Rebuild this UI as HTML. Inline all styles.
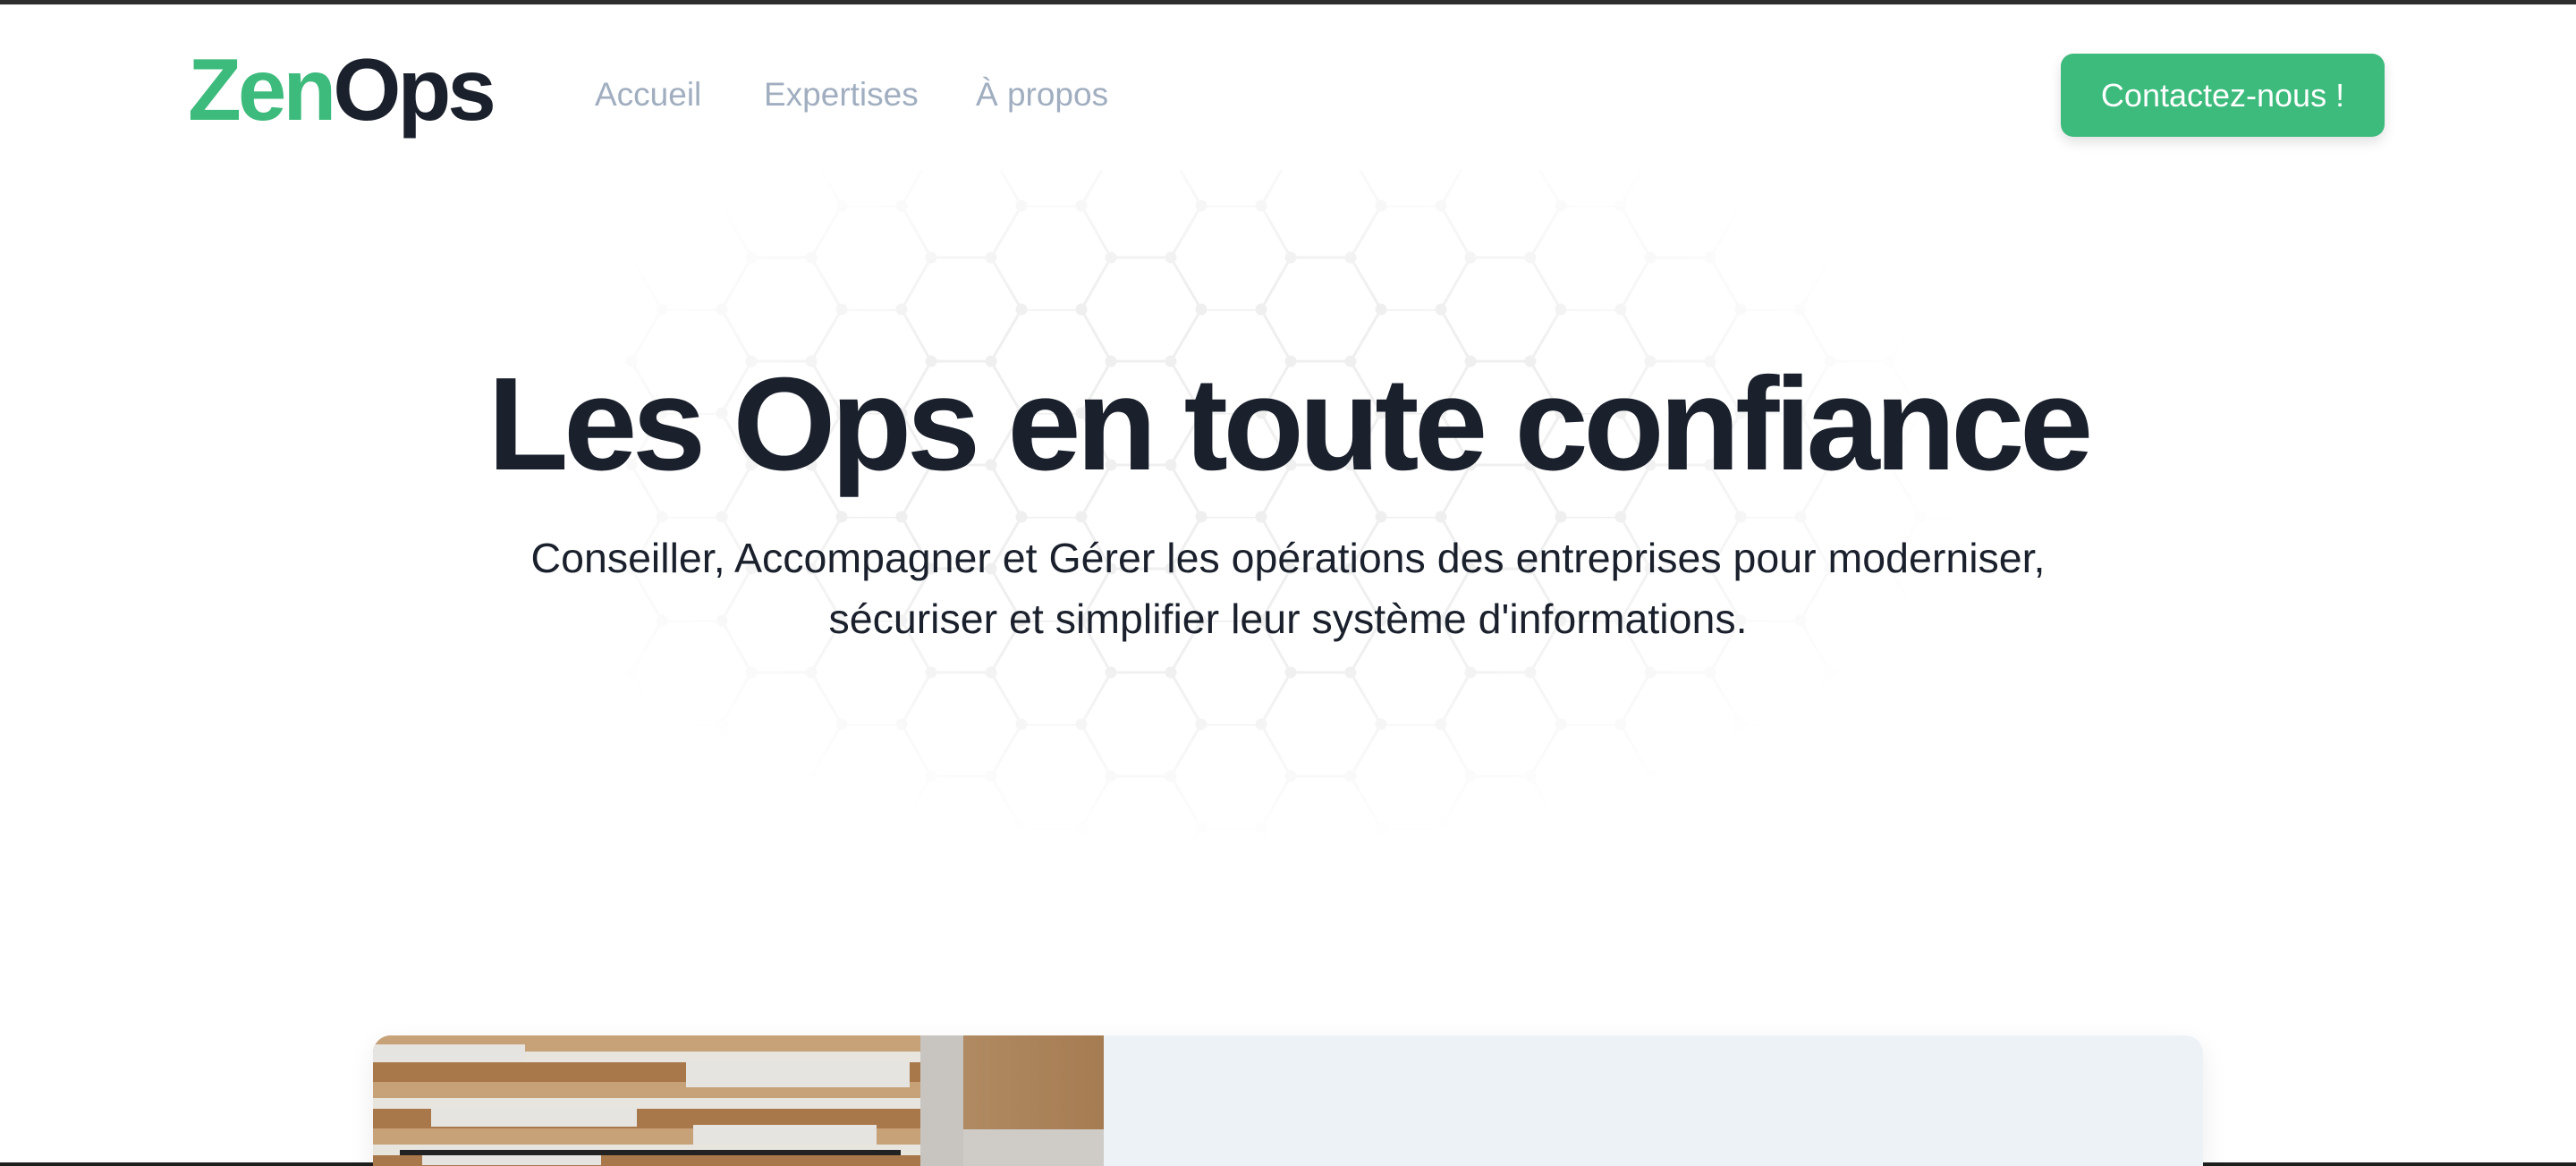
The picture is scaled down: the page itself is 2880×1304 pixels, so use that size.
<!DOCTYPE html>
<html><head><meta charset="utf-8"><style>
*{margin:0;padding:0;box-sizing:border-box}
html,body{width:2880px;height:1304px;overflow:hidden;background:#fff;font-family:"Liberation Sans",sans-serif}
#w{position:relative;width:2880px;height:1304px;overflow:hidden}
.topbar{position:absolute;left:0;top:0;width:2880px;height:5px;background:#2d2d2d}
.logo{position:absolute;left:210px;top:40px;font-size:98px;font-weight:700;letter-spacing:-4px;line-height:120px}
.logo .z{color:#3dbb7c}.logo .o{color:#1a202c}
.nav{position:absolute;top:84px;font-size:37px;color:#a0aec0;line-height:44px}
.btn{position:absolute;left:2304px;top:60px;width:362px;height:93px;background:#3dbb7c;border-radius:14px;color:#fff;font-size:36px;text-align:center;line-height:93px;box-shadow:0 6px 14px rgba(0,0,0,.12)}
.hex{position:absolute;left:700px;top:190px}
h1{position:absolute;left:0;width:2880px;top:395px;text-align:center;font-size:148px;font-weight:700;color:#1a202c;letter-spacing:-5.5px;line-height:160px}
.sub{position:absolute;left:0;width:2880px;top:590px;text-align:center;font-size:46.5px;color:#1a202c;line-height:68px}
.card{position:absolute;left:417px;top:1158px;width:2046px;height:146px;border-radius:20px 20px 0 0;overflow:hidden;background:#edf2f7;box-shadow:0 10px 30px rgba(0,0,0,.08);z-index:2}
.img{position:absolute;left:0;top:0;width:817px;height:146px;background:
linear-gradient(90deg,rgba(0,0,0,0) 0,rgba(0,0,0,0) 612px,#c8c4c0 612px,#c8c4c0 660px,#b08a62 660px,#a67c52 817px),
repeating-linear-gradient(180deg,#c7a178 0 18px,#e8e4de 18px 30px,#a9784a 30px 52px),
#b98a5c}
.bars{position:absolute;left:0;top:0;width:817px;height:146px}
.bottom{position:absolute;left:0;top:1300px;width:2880px;height:4px;background:#1e1e1e;z-index:1}
</style></head><body><div id="w">
<div class="topbar"></div>
<div class="logo"><span class="z">Zen</span><span class="o">Ops</span></div>
<div class="nav" style="left:665px">Accueil</div>
<div class="nav" style="left:854px">Expertises</div>
<div class="nav" style="left:1091px">À propos</div>
<div class="btn">Contactez-nous !</div>
<svg class="hex" width="1500" height="760" viewBox="0 0 1500 760">
<defs>
<pattern id="p" width="201" height="116" patternUnits="userSpaceOnUse" x="40" y="40">
<g stroke="#efefef" stroke-width="3" fill="#efefef">
<path d="M0 0 L67 0 L100 58 L167 58 L201 0 M100 58 L67 116 M167 58 L201 116" fill="none"/>
<circle cx="0" cy="0" r="5"/><circle cx="67" cy="0" r="5"/><circle cx="100" cy="58" r="5"/><circle cx="167" cy="58" r="5"/><circle cx="201" cy="0" r="5"/><circle cx="67" cy="116" r="5"/><circle cx="0" cy="116" r="5"/><circle cx="201" cy="116" r="5"/>
</g></pattern>
<radialGradient id="g" cx="0.45" cy="0.45" r="0.55"><stop offset="0.5" stop-color="#fff"/><stop offset="1" stop-color="#000"/></radialGradient>
<mask id="m"><rect width="1500" height="760" fill="url(#g)"/></mask>
</defs>
<rect width="1500" height="760" fill="url(#p)" mask="url(#m)"/>
</svg>
<h1>Les Ops en toute confiance</h1>
<div class="sub">Conseiller, Accompagner et Gérer les opérations des entreprises pour moderniser,<br>sécuriser et simplifier leur système d'informations.</div>
<div class="bottom"></div>
<div class="card"><div class="img"></div>
<svg class="bars" viewBox="0 0 817 146"><g fill="#e6e4e0">
<rect x="0" y="10" width="170" height="18"/><rect x="65" y="80" width="230" height="22"/><rect x="55" y="125" width="200" height="20"/>
<rect x="350" y="30" width="250" height="28"/><rect x="358" y="100" width="205" height="22"/></g>
<rect x="30" y="128" width="560" height="6" fill="#222"/>
<rect x="660" y="105" width="157" height="41" fill="#cfcbc7"/></svg>
</div>
</div></body></html>
